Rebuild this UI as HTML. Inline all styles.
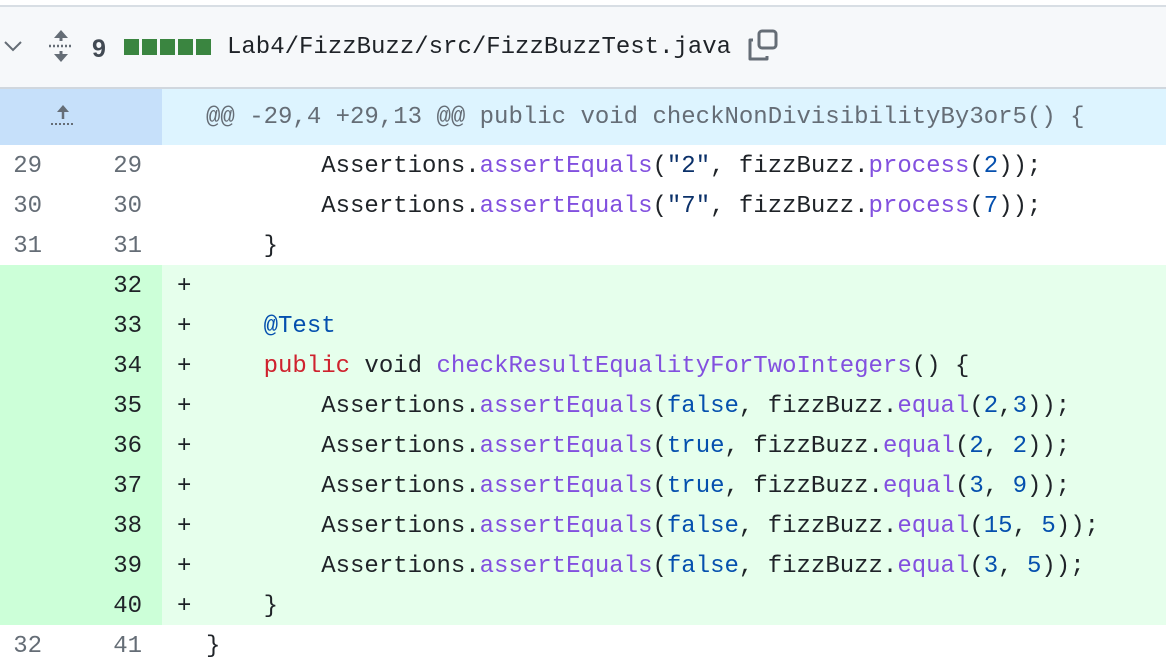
<!DOCTYPE html>
<html><head><meta charset="utf-8"><style>
html,body{margin:0;padding:0;width:1166px;height:660px;overflow:hidden;background:#fff;font-family:"Liberation Mono",monospace;}
.top{position:absolute;left:0;top:0;width:1166px;height:5px;background:#fff;border-bottom:2px solid #d8dee4;}
.hdr{position:absolute;left:0;top:7px;width:1166px;height:80px;background:#f6f8fa;border-bottom:2px solid #d0d7de;}
.t{position:absolute;white-space:pre;font-size:24px;line-height:40px;margin-top:2px;}
.row{position:absolute;left:0;width:1166px;height:40px;}
.g{position:absolute;left:0;top:0;width:162px;height:40px;}
.ln{position:absolute;font-size:24px;line-height:40px;color:#656d76;text-align:right;width:30px;margin-top:2px;}
.k{color:#cf222e}.f{color:#8250df}.c{color:#0550ae}.s{color:#0a3069}
</style></head><body>
<div class="top"></div>
<div class="hdr">
<svg style="position:absolute;left:3px;top:32px" width="20" height="14" viewBox="0 0 20 14"><path d="M2 3 L10 11 L18 3" fill="none" stroke="#656d76" stroke-width="2"/></svg>
<svg style="position:absolute;left:46px;top:22px" width="30" height="34" viewBox="0 0 30 34"><path d="M15 1 L8 9 H22 Z M15 33 L8 25 H22 Z" fill="#656d76"/><path d="M15 8 V12 M15 22 V26" stroke="#656d76" stroke-width="3"/><path d="M3 17 H27" stroke="#656d76" stroke-width="2.5" stroke-dasharray="2 2"/></svg>
<div class="t" style="left:92px;top:20px;font-weight:bold;color:#424a53;font-family:'Liberation Sans',sans-serif;font-size:25px">9</div>
<div style="position:absolute;left:124px;top:32px;height:16px;display:flex;gap:3px">
<div style="width:15px;height:16px;background:#3a8540"></div><div style="width:15px;height:16px;background:#3a8540"></div><div style="width:15px;height:16px;background:#3a8540"></div><div style="width:15px;height:16px;background:#3a8540"></div><div style="width:15px;height:16px;background:#3a8540"></div></div>
<div class="t" style="left:227px;top:19px;color:#1f2328">Lab4/FizzBuzz/src/FizzBuzzTest.java</div>
<svg style="position:absolute;left:746px;top:22px" width="34" height="38" viewBox="0 0 34 38"><rect x="13" y="2" width="17" height="17" rx="3" fill="none" stroke="#656d76" stroke-width="3"/><path d="M7 11 H4 V30 H21 V27" fill="none" stroke="#656d76" stroke-width="3" stroke-linejoin="round"/></svg>
</div>
<div class="row" style="top:89px;height:56px;background:#ddf4ff">
<div class="g" style="height:56px;background:#c6e0fa"></div>
<svg style="position:absolute;left:48px;top:14px" width="30" height="28" viewBox="0 0 30 28"><path d="M15 2 L9 9 H21 Z" fill="#656d76"/><path d="M15 8 V16" stroke="#656d76" stroke-width="2.5"/><path d="M3 21 H27" stroke="#656d76" stroke-width="2" stroke-dasharray="2 2"/></svg>
<div class="t" style="left:206px;top:7px;color:#656d76">@@ -29,4 +29,13 @@ public void checkNonDivisibilityBy3or5() {</div>
</div>

<div class="row" style="top:145px"><div class="ln" style="left:12px">29</div><div class="ln" style="left:112px">29</div><div class="t" style="left:206px;color:#1f2328">        Assertions.<span class="f">assertEquals</span>(<span class="s">"2"</span>, fizzBuzz.<span class="f">process</span>(<span class="c">2</span>));</div></div>
<div class="row" style="top:185px"><div class="ln" style="left:12px">30</div><div class="ln" style="left:112px">30</div><div class="t" style="left:206px;color:#1f2328">        Assertions.<span class="f">assertEquals</span>(<span class="s">"7"</span>, fizzBuzz.<span class="f">process</span>(<span class="c">7</span>));</div></div>
<div class="row" style="top:225px"><div class="ln" style="left:12px">31</div><div class="ln" style="left:112px">31</div><div class="t" style="left:206px;color:#1f2328">    }</div></div>

<div class="row" style="top:265px;height:360px;background:#e6ffec"><div class="g" style="height:360px;background:#ccffd8"></div></div>
<div class="row" style="top:265px"><div class="ln" style="left:112px;color:#1f2328">32</div><div class="t" style="left:177px;color:#1f2328">+</div></div>
<div class="row" style="top:305px"><div class="ln" style="left:112px;color:#1f2328">33</div><div class="t" style="left:177px;color:#1f2328">+</div><div class="t" style="left:206px"><span class="c">    @Test</span></div></div>
<div class="row" style="top:345px"><div class="ln" style="left:112px;color:#1f2328">34</div><div class="t" style="left:177px;color:#1f2328">+</div><div class="t" style="left:206px;color:#1f2328">    <span class="k">public</span> void <span class="f">checkResultEqualityForTwoIntegers</span>() {</div></div>
<div class="row" style="top:385px"><div class="ln" style="left:112px;color:#1f2328">35</div><div class="t" style="left:177px;color:#1f2328">+</div><div class="t" style="left:206px;color:#1f2328">        Assertions.<span class="f">assertEquals</span>(<span class="c">false</span>, fizzBuzz.<span class="f">equal</span>(<span class="c">2</span>,<span class="c">3</span>));</div></div>
<div class="row" style="top:425px"><div class="ln" style="left:112px;color:#1f2328">36</div><div class="t" style="left:177px;color:#1f2328">+</div><div class="t" style="left:206px;color:#1f2328">        Assertions.<span class="f">assertEquals</span>(<span class="c">true</span>, fizzBuzz.<span class="f">equal</span>(<span class="c">2</span>, <span class="c">2</span>));</div></div>
<div class="row" style="top:465px"><div class="ln" style="left:112px;color:#1f2328">37</div><div class="t" style="left:177px;color:#1f2328">+</div><div class="t" style="left:206px;color:#1f2328">        Assertions.<span class="f">assertEquals</span>(<span class="c">true</span>, fizzBuzz.<span class="f">equal</span>(<span class="c">3</span>, <span class="c">9</span>));</div></div>
<div class="row" style="top:505px"><div class="ln" style="left:112px;color:#1f2328">38</div><div class="t" style="left:177px;color:#1f2328">+</div><div class="t" style="left:206px;color:#1f2328">        Assertions.<span class="f">assertEquals</span>(<span class="c">false</span>, fizzBuzz.<span class="f">equal</span>(<span class="c">15</span>, <span class="c">5</span>));</div></div>
<div class="row" style="top:545px"><div class="ln" style="left:112px;color:#1f2328">39</div><div class="t" style="left:177px;color:#1f2328">+</div><div class="t" style="left:206px;color:#1f2328">        Assertions.<span class="f">assertEquals</span>(<span class="c">false</span>, fizzBuzz.<span class="f">equal</span>(<span class="c">3</span>, <span class="c">5</span>));</div></div>
<div class="row" style="top:585px"><div class="ln" style="left:112px;color:#1f2328">40</div><div class="t" style="left:177px;color:#1f2328">+</div><div class="t" style="left:206px;color:#1f2328">    }</div></div>

<div class="row" style="top:625px"><div class="ln" style="left:12px">32</div><div class="ln" style="left:112px">41</div><div class="t" style="left:206px;color:#1f2328">}</div></div>
</body></html>
